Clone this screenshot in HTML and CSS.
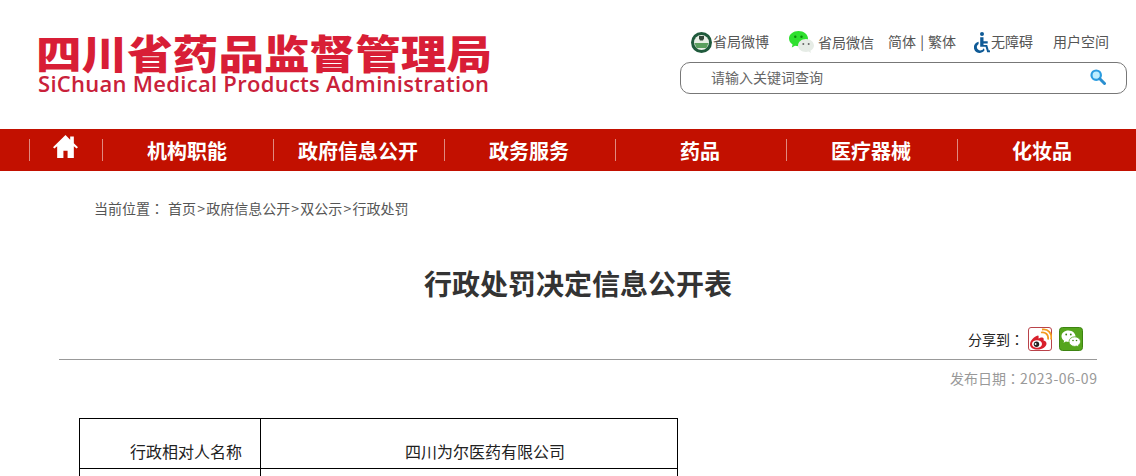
FILE: index.html
```html
<!DOCTYPE html>
<html lang="zh-CN">
<head>
<meta charset="utf-8">
<title>行政处罚决定信息公开表</title>
<link rel="stylesheet" href="styles.css">
</head>
<body>
<header class="top">
  <div class="logo">
    <div class="logo-cn">四川省药品监督管理局</div>
    <div class="logo-en">SiChuan Medical Products Administration</div>
  </div>
  <div class="tools">
    <div class="links">
      <a class="link link-weibo">
        <svg class="ic-badge" viewBox="0 0 21 21"><circle cx="10.5" cy="10.5" r="10.5" fill="#1f5a3c"/><circle cx="10.5" cy="10.5" r="7.5" fill="#e8efe6"/><path d="M3.500 11h14l-2 5h-10z" fill="#5a9f5e"/><path d="M8 4h5v2.500l-1 2h-3l-1-2z" fill="#33483a"/></svg>
        <span>省局微博</span>
      </a>
      <a class="link link-wechat">
        <svg class="ic-wechat" viewBox="0 0 25 22"><path d="M9.500 0C4.300 0 0 3.300 0 7.600c0 2.500 1.400 4.600 3.600 6L2.800 16.400l3.200-1.700c1.100.3 2.300.5 3.500.5 5.200 0 9.500-3.400 9.500-7.600S14.700 0 9.500 0z" fill="#2fe02f"/><circle cx="6.300" cy="5.800" r="1.200" fill="#0a8a0a"/><circle cx="12.500" cy="5.800" r="1.200" fill="#0a8a0a"/><path d="M17 8c-4.400 0-8 2.900-8 6.500S12.600 21 17 21c.9 0 1.800-.1 2.600-.4l2.400 1.400-.6-2.300c2.200-1.200 3.600-3.200 3.600-5.200C25 10.900 21.400 8 17 8z" fill="#e6ece6"/><circle cx="14.300" cy="13" r="1" fill="#666"/><circle cx="19.700" cy="13" r="1" fill="#666"/></svg>
        <span>省局微信</span>
      </a>
      <a class="link link-lang"><span>简体 <i>|</i> 繁体</span></a>
      <a class="link link-access">
        <svg class="ic-access" viewBox="0 0 16 21"><circle cx="8" cy="2" r="2" fill="#0f5a96"/><path d="M6.200 5.200h3.300v4h4.200v2.300H9.500v1.500h3.700l1.600 5.600 1.200-.3v2h-2.800l-1.600-5.500H6.200z" fill="#0f5a96"/><path d="M4.600 9.700v2.200a3.500 3.500 0 1 0 5 4.300l1 1.800A5.700 5.700 0 1 1 4.600 9.700z" fill="#0f5a96"/></svg>
        <span>无障碍</span>
      </a>
      <a class="link link-user"><span>用户空间</span></a>
    </div>
    <div class="search">
      <span class="search-text">请输入关键词查询</span>
      <svg class="ic-search" viewBox="0 0 16 16"><circle cx="6.200" cy="6.200" r="4.700" fill="#bdeeff" stroke="#2a9ce0" stroke-width="2.200"/><path d="M9.800 9.800l4.700 4.700" stroke="#2a8fd0" stroke-width="3" stroke-linecap="round"/></svg>
    </div>
  </div>
</header>
<nav class="nav">
  <a class="nav-item nav-home"><svg class="ic-home" viewBox="0 0 24 22"><path d="M12 0L0 11.600l1.400 1.400L4 10.700V22h6v-7h4v7h6V10.700l2.600 2.300 1.400-1.400L20 7.800V1.500h-3.500v3z" fill="#fff"/></svg></a>
  <a class="nav-item">机构职能</a>
  <a class="nav-item">政府信息公开</a>
  <a class="nav-item">政务服务</a>
  <a class="nav-item">药品</a>
  <a class="nav-item">医疗器械</a>
  <a class="nav-item">化妆品</a>
</nav>
<div class="crumb"><span class="crumb-label">当前位置<span class="colon" lang="zh-TW">：</span></span><span class="crumb-path">首页<b class="sep">&gt;</b>政府信息公开<b class="sep">&gt;</b>双公示<b class="sep">&gt;</b>行政处罚</span></div>
<main class="article">
  <h1 class="title">行政处罚决定信息公开表</h1>
  <div class="share">
    <span>分享到<span class="colon" lang="zh-TW">：</span></span>
    <svg class="ic-share" viewBox="0 0 24 24"><rect x=".5" y=".5" width="23" height="23" rx="2.500" fill="#fff" stroke="#b9434a"/><path d="M10 8.500c-4 1-8 5-8 9 0 3 3.500 5 7.500 5 5 0 9-2.700 9-6 0-2-2-2.700-3-3 .5-1.500.3-3-1.500-3-1.300 0-2.500.6-3.500 1 .3-1.800.2-3-.5-3z" fill="#d8202c"/><ellipse cx="9" cy="17" rx="5" ry="3.800" fill="#fff"/><circle cx="8.500" cy="17.300" r="2.700" fill="#222"/><circle cx="7.600" cy="17" r=".9" fill="#fff"/><path d="M13 5.500c4-1 8 2 7 7M14 2.500c6-1.200 10.500 4 9 10" fill="none" stroke="#f39a1e" stroke-width="1.800"/></svg>
    <svg class="ic-share ic-share-gap" viewBox="0 0 24 24"><rect x=".5" y=".5" width="23" height="23" rx="3" fill="#55a51c" stroke="#3d8412"/><path d="M9.500 3.500C5.400 3.500 2.500 6.200 2.500 9.300c0 1.900 1 3.500 2.700 4.500l-.6 2 2.300-1.200c.8.200 1.700.4 2.600.4 4 0 7-2.700 7-5.700s-3-5.800-7-5.800z" fill="#fff"/><path d="M15.700 9.800c-3.200 0-5.700 2.200-5.700 4.800s2.500 4.800 5.700 4.800c.7 0 1.400-.1 2-.3l2 1-.5-1.700c1.400-.9 2.300-2.300 2.300-3.800 0-2.600-2.600-4.800-5.800-4.800z" fill="#fff" stroke="#55a51c" stroke-width=".8"/><circle cx="7.200" cy="7.500" r=".9" fill="#3d8412"/><circle cx="11.800" cy="7.500" r=".9" fill="#3d8412"/><circle cx="14" cy="13.500" r=".8" fill="#3d8412"/><circle cx="17.500" cy="13.500" r=".8" fill="#3d8412"/></svg>
  </div>
  <div class="meta">发布日期<span class="colon" lang="zh-TW">：</span><span class="meta-date">2023-06-09</span></div>
  <table class="info">
    <tr class="row-first"><td class="cell-key">行政相对人名称</td><td class="cell-val">四川为尔医药有限公司</td></tr>
    <tr class="row-next"><td class="cell-key"></td><td class="cell-val"></td></tr>
  </table>
</main>
</body>
</html>
```
FILE: styles.css
```css
* { box-sizing: border-box; }
html, body { margin: 0; height: 476px; overflow: hidden; background: #fff; }
body { font-family: "Noto Sans CJK SC", "Liberation Sans", sans-serif; font-size: 14px; color: #333; }

.top { height: 129px; display: flex; justify-content: space-between; padding: 0 9px 0 37px; }
.logo { padding-top: 32px; width: 453px; }
.logo-cn { font-size: 40px; line-height: 40px; font-weight: 900; white-space: nowrap; color: #d81e36; transform: scaleX(1.14); transform-origin: left center; margin-left: -1px; }
.logo-en { font-family: "Open Sans", sans-serif; font-size: 22px; line-height: 22px; padding-left: 1px; font-weight: 600; color: #c9213a; white-space: nowrap; letter-spacing: .28px; }

.tools { width: 447px; padding-top: 31px; }
.links { display: flex; align-items: center; height: 22px; padding-left: 11px; margin-bottom: 9px; }
.link { display: flex; align-items: center; color: #555; white-space: nowrap; line-height: 22px; }
.link span { padding-bottom: 2px; }
.link-wechat span { padding-bottom: 0; }
.link i { font-style: normal; color: #444; padding: 0 1px; }
.link-weibo { gap: 1px; width: 98px; }
.link-wechat { gap: 4px; width: 99px; }
.link-lang { width: 86px; }
.link-access { gap: 1px; width: 79px; }
.ic-badge { width: 21px; height: 21px; }
.ic-wechat { width: 25px; height: 22px; }
.ic-access { width: 16px; height: 21px; }

.search { height: 32px; border: 1px solid #777; border-radius: 10px; display: flex; align-items: center; justify-content: space-between; padding: 0 20px 2px 30px; }
.search-text { color: #666; }
.ic-search { width: 16px; height: 16px; }

.nav { height: 42px; background: #c21000; display: flex; padding-left: 29px; }
.nav-item { width: 171px; height: 42px; display: flex; align-items: center; justify-content: center; padding-right: 1px; color: #fff; font-size: 20px; font-weight: 700; position: relative; }
.nav-item::before { content: ""; position: absolute; left: 0; top: 10px; height: 22px; width: 1px; background: #e08a80; }
.nav-home { width: 73px; }
.ic-home { width: 25px; height: 23px; margin-top: -7px; }

.crumb { padding: 27px 0 0 94px; height: 56px; line-height: 20px; color: #555; display: flex; }
.crumb-label { width: 74px; }
.sep { font-weight: 400; padding: 0 1.2px; }
.colon { font-family: "Noto Sans CJK TC", sans-serif; }

.article { margin: 0 39px 0 59px; }
.title { margin: 0; font-size: 28px; line-height: 40px; font-weight: 700; color: #333; text-align: center; padding-top: 36px; height: 99px; }
.share { display: flex; align-items: center; justify-content: flex-end; height: 35px; color: #222; padding-right: 14px; border-bottom: 1px solid #999; padding-bottom: 6px; margin-top: -1px; }
.ic-share { width: 24px; height: 24px; margin-left: 4px; }
.ic-share-gap { margin-left: 7px; }
.meta { text-align: right; color: #999; line-height: 20px; padding-top: 8px; height: 58px; }
.meta-date { letter-spacing: .55px; margin-right: -.5px; }

.info { border-collapse: collapse; margin-left: 20px; width: 599px; table-layout: fixed; }
.info td { border: 1px solid #000; font-size: 16px; color: #222; text-align: center; text-indent: 2em; vertical-align: bottom; line-height: 22px; padding: 0; }
.cell-key { width: 181px; }
.row-first td { height: 50px; padding-bottom: 6px; }
.row-next td { height: 40px; }
```
